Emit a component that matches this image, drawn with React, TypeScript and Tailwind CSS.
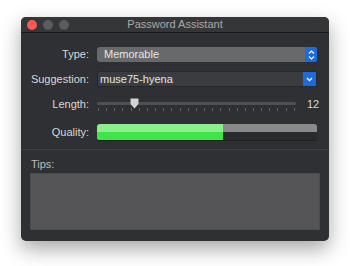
import React from "react";

const font = { fontFamily: '"Liberation Sans", Arial, sans-serif' };

function Label({ children }: { children: React.ReactNode }) {
  return (
    <div className="w-[68px] shrink-0 text-right text-[11px] leading-none text-[#d8d8d8]">
      {children}
    </div>
  );
}

export default function App() {
  const ticks = Array.from({ length: 25 }, (_, i) => i);

  return (
    <div className="w-[350px] h-[266px] bg-white pt-[17px] pl-[21px]" style={font}>
      <div className="w-[308px] h-[224px] rounded-[5px] bg-[#2e3033] shadow-[0_8px_20px_rgba(0,0,0,0.35)] overflow-hidden flex flex-col">
        {/* title bar */}
        <div className="relative h-[16px] shrink-0 bg-[#353638] border-b border-[#18191a] flex items-center">
          <div className="flex gap-[6px] pl-[6px]">
            <span className="w-[10px] h-[10px] rounded-full bg-[#fc5753]" />
            <span className="w-[10px] h-[10px] rounded-full bg-[#5a5b5d]" />
            <span className="w-[10px] h-[10px] rounded-full bg-[#5a5b5d]" />
          </div>
          <div className="absolute inset-0 flex items-center justify-center text-[11px] text-[#a9a9a9]">
            Password Assistant
          </div>
        </div>

        {/* form */}
        <div className="flex flex-col pr-[12px] pt-[14px]">
          <div className="flex items-center gap-[8px] h-[15px]">
            <Label>Type:</Label>
            <div className="flex-1 h-[15px] rounded-[3px] bg-[#68696b] flex items-center overflow-hidden">
              <span className="flex-1 pl-[7px] text-[11px] text-[#e4e4e4] leading-none">Memorable</span>
              <span className="w-[12px] h-full bg-[#1c6bdf] flex items-center justify-center">
                <svg width="7" height="10" viewBox="0 0 7 10" fill="none" stroke="white" strokeWidth="1.2">
                  <path d="M1 3.5 L3.5 1 L6 3.5" />
                  <path d="M1 6.5 L3.5 9 L6 6.5" />
                </svg>
              </span>
            </div>
          </div>

          <div className="flex items-center gap-[8px] h-[16px] mt-[9px]">
            <Label>Suggestion:</Label>
            <div className="flex-1 h-[16px] rounded-[2px] bg-[#3b3c3f] border border-[#27282a] flex items-center overflow-hidden">
              <span className="flex-1 pl-[2px] text-[11px] text-[#e4e4e4] leading-none">muse75-hyena</span>
              <span className="w-[13px] h-full bg-[#1c6bdf] flex items-center justify-center">
                <svg width="7" height="5" viewBox="0 0 7 5" fill="none" stroke="white" strokeWidth="1.3">
                  <path d="M1 1 L3.5 3.5 L6 1" />
                </svg>
              </span>
            </div>
          </div>

          <div className="flex items-center gap-[8px] h-[16px] mt-[9px]">
            <Label>Length:</Label>
            <div className="flex-1 flex items-center gap-[11px]">
              <div className="relative w-[199px] h-[16px]">
                <div className="absolute left-0 right-0 top-[6px] h-[3px] rounded-full bg-[#4f5053]" />
                <div className="absolute left-[1px] right-[1px] top-[12px] flex justify-between">
                  {ticks.map((t) => (
                    <span key={t} className="w-px h-[3px] bg-[#646568]" />
                  ))}
                </div>
                <svg className="absolute left-[33px] top-[2px]" width="9" height="11" viewBox="0 0 9 11">
                  <path d="M1 0.5 H8 A0.5 0.5 0 0 1 8.5 1 V6 L4.5 10.5 L0.5 6 V1 A0.5 0.5 0 0 1 1 0.5 Z" fill="#d4d4d4" />
                </svg>
              </div>
              <span className="text-[11px] text-[#d8d8d8] leading-none">12</span>
            </div>
          </div>

          <div className="flex items-center gap-[8px] h-[17px] mt-[12px]">
            <Label>Quality:</Label>
            <div className="flex-1 h-[17px] rounded-[3px] overflow-hidden flex border-b border-[#1d1e20]">
              <div className="w-[126px] flex flex-col">
                <div className="h-1/2 bg-[#8cf08a]" />
                <div className="h-1/2 bg-[#3ee449]" />
              </div>
              <div className="flex-1 flex flex-col">
                <div className="h-1/2 bg-[#8a8a8b]" />
                <div className="h-1/2 bg-[#2a2b2d]" />
              </div>
            </div>
          </div>
        </div>

        <div className="mt-[8px] h-px bg-[#3f4043]" />

        <div className="px-[9px] pt-[9px]">
          <div className="pl-[1px] text-[11px] leading-none text-[#bdbdbd]">Tips:</div>
          <div className="mt-[3px] h-[57px] bg-[#555557] border border-[#4a4b4d]" />
        </div>
      </div>
    </div>
  );
}
